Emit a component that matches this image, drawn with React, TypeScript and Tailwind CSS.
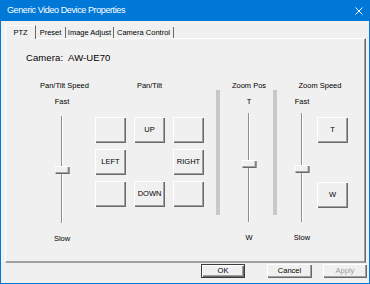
import React from 'react';

const raised =
  'shadow-[inset_1px_1px_#ffffff,inset_-1px_-1px_#696969,inset_-2px_-2px_#a0a0a0]';

function Btn({ label, className = '' }: { label?: string; className?: string }) {
  return (
    <button
      type="button"
      className={`flex items-center justify-center bg-[#f0f0f0] text-[7.5px] leading-none text-black ${raised} ${className}`}
    >
      {label}
    </button>
  );
}

// vertical trackbar, thumb overlays the groove
function Track({ h, thumb, w }: { h: string; thumb: string; w: string }) {
  return (
    <div className={`relative ${w} ${h}`}>
      <div className="mx-auto h-full w-[2px] border-l border-[#8f8f8f] bg-white" />
      <div
        className={`absolute left-1/2 -translate-x-1/2 ${thumb} h-[8px] w-[15px] bg-[#f0f0f0] ${raised}`}
      />
    </div>
  );
}

export default function App() {
  return (
    <div
      className="flex h-[284px] w-[370px] flex-col bg-[#0078d7] px-[1px] pb-[1px] text-black"
      style={{ fontFamily: '"Liberation Sans", Arial, sans-serif' }}
    >
      {/* title bar */}
      <div className="flex h-[21px] shrink-0 items-center justify-between pl-[6px] pr-[6px] text-white">
        <span className="text-[9px] leading-none tracking-[-0.4px]">
          Generic Video Device Properties
        </span>
        <svg width="8" height="8" viewBox="0 0 8 8">
          <path d="M0.5 0.5 L7.5 7.5 M7.5 0.5 L0.5 7.5" stroke="#fff" strokeWidth="1" />
        </svg>
      </div>

      <div className="flex flex-1 flex-col bg-[#f0f0f0]">
        {/* tabs */}
        <div className="flex h-[17px] items-end pl-[4px] text-[7.5px] leading-none">
          <div className="relative z-10 -mb-px flex h-[14px] w-[31px] items-start justify-center border-l border-t border-r border-l-white border-t-white border-r-[#696969] bg-[#f0f0f0] pt-[3px]">
            PTZ
          </div>
          <div className="flex h-[11px] w-[30px] items-center justify-center border-r border-[#696969] pt-[1px]">
            Preset
          </div>
          <div className="flex h-[11px] w-[48px] items-center justify-center border-r border-[#696969] pt-[1px]">
            Image Adjust
          </div>
          <div className="flex h-[11px] w-[60px] items-center justify-center border-r border-[#696969] pt-[1px]">
            Camera Control
          </div>
        </div>

        {/* tab page */}
        <div className="ml-[4px] flex h-[225px] w-[361px] flex-col border-l border-t border-r border-b border-l-white border-t-white border-r-[#696969] border-b-[#a0a0a0] shadow-[inset_-1px_-1px_#a0a0a0]">
          <div className="whitespace-pre pl-[20px] pt-[13px] text-[9.5px] leading-[12px] tracking-[0.1px]">
            Camera:  AW-UE70
          </div>

          <div className="mt-[17px] flex text-[7.5px] leading-[10px]">
            {/* Pan/Tilt Speed */}
            <div className="ml-[34px] flex w-[51px] flex-col">
              <div className="whitespace-nowrap">Pan/Tilt Speed</div>
              <div className="ml-[14px] flex w-[16px] flex-col items-center">
                <div className="mt-[6px]">Fast</div>
                <div className="mt-[9px]">
                  <Track w="w-[16px]" h="h-[107px]" thumb="top-[50px]" />
                </div>
                <div className="mt-[11px]">Slow</div>
              </div>
            </div>

            {/* Pan/Tilt */}
            <div className="ml-[4px] flex w-[109px] flex-col">
              <div className="text-center">Pan/Tilt</div>
              <div className="mt-[26px] grid grid-cols-[31px_31px_31px] grid-rows-[26px_26px_26px] gap-x-[8px] gap-y-[6px]">
                <Btn />
                <Btn label="UP" />
                <Btn />
                <Btn label="LEFT" />
                <div />
                <Btn label="RIGHT" />
                <Btn />
                <Btn label="DOWN" />
                <Btn />
              </div>
            </div>

            <div className="ml-[12px] mt-[9px] h-[125px] w-[4px] bg-[#c8c8c8]" />

            {/* Zoom Pos */}
            <div className="ml-[9px] flex w-[40px] flex-col items-center">
              <div className="whitespace-nowrap">Zoom Pos</div>
              <div className="mt-[6px]">T</div>
              <div className="mt-[6px]">
                <Track w="w-[16px]" h="h-[109px]" thumb="top-[47px]" />
              </div>
              <div className="mt-[11px]">W</div>
            </div>

            <div className="ml-[4px] mt-[9px] h-[125px] w-[4px] bg-[#c8c8c8]" />

            {/* Zoom Speed */}
            <div className="ml-[13px] flex w-[60px] flex-col">
              <div className="whitespace-nowrap text-center">Zoom Speed</div>
              <div className="flex">
                <div className="flex w-[24px] flex-col items-center">
                  <div className="mt-[6px]">Fast</div>
                  <div className="mt-[6px]">
                    <Track w="w-[24px]" h="h-[109px]" thumb="top-[52px]" />
                  </div>
                  <div className="mt-[11px]">Slow</div>
                </div>
                <div className="ml-[3px] flex flex-col">
                  <Btn label="T" className="mt-[26px] h-[26px] w-[31px]" />
                  <Btn label="W" className="mt-[39px] h-[26px] w-[31px]" />
                </div>
              </div>
            </div>
          </div>
        </div>

        {/* dialog buttons */}
        <div className="mt-[1px] flex text-[7.5px]">
          <Btn label="OK" className="ml-[200px] h-[14px] w-[44px] border border-[#3c3c3c]" />
          <Btn label="Cancel" className="ml-[22px] h-[14px] w-[45px]" />
          <Btn label="Apply" className="ml-[11px] h-[14px] w-[44px] !text-[#a0a0a0]" />
        </div>
      </div>
    </div>
  );
}
